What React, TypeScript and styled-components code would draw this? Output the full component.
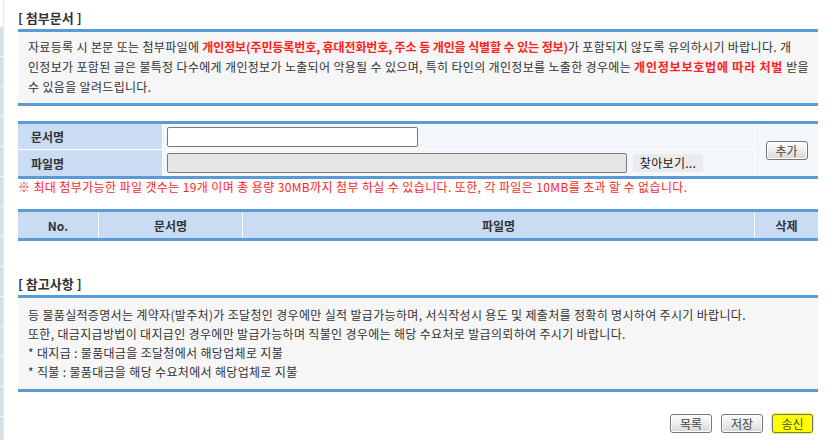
import React from "react";
import styled, { createGlobalStyle } from "styled-components";

const GlobalStyle = createGlobalStyle`
  html, body { margin: 0; padding: 0; background: #ffffff; }
  body {
    font-family: "Noto Sans CJK KR", "Noto Sans", sans-serif;
    font-size: 12px;
    color: #333333;
  }
  * { box-sizing: border-box; }
`;

const Page = styled.div`
  display: flex;
  width: 832px;
  min-height: 440px;
`;

const SideStrip = styled.div`
  width: 4px;
  flex: none;
  background:
    linear-gradient(#ffffff 0 26px, transparent 26px),
    repeating-linear-gradient(
      to bottom,
      #ffffff 0 1px,
      #d5dfe6 1px 30px
    );
  background-position: 0 0, 0 26px;
  border-right: 1px solid #e3e8ec;
`;

const Main = styled.div`
  width: 800px;
  margin-left: 14px;
  display: flex;
  flex-direction: column;
`;

const SectionTitle = styled.div<{ $top: number }>`
  margin-top: ${(p) => p.$top}px;
  height: 18px;
  line-height: 18px;
  font-size: 13px;
  font-weight: 700;
  color: #333333;
  margin-bottom: 2px;
`;

const InfoBox = styled.div<{ $pt: number; $pb: number; $lh: number }>`
  border-top: 3px solid #5b9bd5;
  border-bottom: 3px solid #5b9bd5;
  background: #f6f6f6;
  padding: ${(p) => p.$pt}px 10px ${(p) => p.$pb}px 10px;
  line-height: ${(p) => p.$lh}px;
  font-size: 12px;
  color: #333333;
  letter-spacing: 0.33px;
`;

const Line = styled.div`
  white-space: nowrap;
`;

const Red = styled.span<{ $ls: number }>`
  color: #ff2020;
  font-weight: 700;
  letter-spacing: ${(p) => p.$ls}px;
`;

const FormTable = styled.div`
  margin-top: 15px;
  border-top: 3px solid #5b9bd5;
  border-bottom: 3px solid #5b9bd5;
  display: grid;
  grid-template-columns: 144px 1fr 63px;
  grid-template-rows: 25px 26px;
  gap: 1px;
  background: #ffffff;
`;

const LabelCell = styled.div`
  background: #c9dcf4;
  font-weight: 700;
  color: #333333;
  padding-left: 13px;
  display: flex;
  align-items: center;
`;

const FieldCell = styled.div`
  background: #f3f7fc;
  padding-left: 4px;
  display: flex;
  align-items: center;
  gap: 6px;
`;

const AddCell = styled.div`
  grid-column: 3;
  grid-row: 1 / span 2;
  background: #f3f7fc;
  display: flex;
  align-items: center;
  justify-content: center;
`;

const TextInput = styled.input<{ $w: number; $disabled?: boolean }>`
  width: ${(p) => p.$w}px;
  height: 20px;
  border: 1px solid #7a7a7a;
  border-radius: 2px;
  background: ${(p) => (p.$disabled ? "#e5e5e5" : "#ffffff")};
  padding: 0 3px;
  font-family: inherit;
  font-size: 12px;
  margin: 0;
`;

const BrowseButton = styled.div`
  width: 70px;
  height: 18px;
  background: #ebebeb;
  color: #111111;
  font-size: 12px;
  line-height: 18px;
  text-align: center;
  letter-spacing: 0.3px;
`;

const GrayButton = styled.div<{ $w: number; $yellow?: boolean }>`
  width: ${(p) => p.$w}px;
  height: 19px;
  border: 1px solid #767676;
  border-radius: 3px;
  background: ${(p) =>
    p.$yellow
      ? "#ffff00"
      : "linear-gradient(to bottom, #fdfdfd 0%, #ececec 50%, #d6d6d4 100%)"};
  box-shadow: ${(p) =>
    p.$yellow ? "0 0 1px 1px #f2f23a" : "inset 0 0 0 1px #ffffff"};
  color: #444444;
  font-size: 12px;
  line-height: 17px;
  text-align: center;
  user-select: none;
`;

const Note = styled.div`
  color: #ff1e1e;
  font-size: 12px;
  line-height: 15px;
  white-space: nowrap;
  letter-spacing: 0.38px;
`;

const ListHeader = styled.div`
  margin-top: 15px;
  border-top: 3px solid #5b9bd5;
  border-bottom: 3px solid #5b9bd5;
  display: grid;
  grid-template-columns: 80px 143px 1fr 63px;
  gap: 1px;
  background: #ffffff;
  height: 32px;
`;

const HeadCell = styled.div`
  background: #c9dcf4;
  font-weight: 700;
  color: #333333;
  display: flex;
  align-items: center;
  justify-content: center;
`;

const ButtonBar = styled.div`
  margin-top: 22px;
  display: flex;
  justify-content: flex-end;
  gap: 9px;
  padding-right: 5px;
`;

export default function App() {
  return (
    <>
      <GlobalStyle />
      <Page>
        <SideStrip />
        <Main>
          <SectionTitle $top={9}>[ 첨부문서 ]</SectionTitle>
          <InfoBox $pt={5} $pb={6} $lh={20}>
            <Line>
              자료등록 시 본문 또는 첨부파일에{" "}
              <Red $ls={-0.1}>개인정보(주민등록번호, 휴대전화번호, 주소 등 개인을 식별할 수 있는 정보)</Red>
              가 포함되지 않도록 유의하시기 바랍니다. 개
            </Line>
            <Line>
              인정보가 포함된 글은 불특정 다수에게 개인정보가 노출되어 악용될 수 있으며, 특히 타인의
              개인정보를 노출한 경우에는 <Red $ls={0.8}>개인정보보호법에 따라 처벌</Red> 받을
            </Line>
            <Line>수 있음을 알려드립니다.</Line>
          </InfoBox>

          <FormTable>
            <LabelCell>문서명</LabelCell>
            <FieldCell>
              <TextInput $w={251} type="text" />
            </FieldCell>
            <AddCell>
              <GrayButton $w={42}>추가</GrayButton>
            </AddCell>
            <LabelCell>파일명</LabelCell>
            <FieldCell>
              <TextInput $w={460} $disabled type="text" readOnly />
              <BrowseButton>찾아보기...</BrowseButton>
            </FieldCell>
          </FormTable>
          <Note>
            ※ 최대 첨부가능한 파일 갯수는 19개 이며 총 용량 30MB까지 첨부 하실 수 있습니다. 또한, 각
            파일은 10MB를 초과 할 수 없습니다.
          </Note>

          <ListHeader>
            <HeadCell>No.</HeadCell>
            <HeadCell>문서명</HeadCell>
            <HeadCell>파일명</HeadCell>
            <HeadCell>삭제</HeadCell>
          </ListHeader>

          <SectionTitle $top={34}>[ 참고사항 ]</SectionTitle>
          <InfoBox $pt={7} $pb={8} $lh={19}>
            <Line>
              등 물품실적증명서는 계약자(발주처)가 조달청인 경우에만 실적 발급가능하며, 서식작성시 용도 및
              제출처를 정확히 명시하여 주시기 바랍니다.
            </Line>
            <Line>
              또한, 대금지급방법이 대지급인 경우에만 발급가능하며 직불인 경우에는 해당 수요처로
              발급의뢰하여 주시기 바랍니다.
            </Line>
            <Line>* 대지급 : 물품대금을 조달청에서 해당업체로 지불</Line>
            <Line>* 직불 : 물품대금을 해당 수요처에서 해당업체로 지불</Line>
          </InfoBox>

          <ButtonBar>
            <GrayButton $w={42}>목록</GrayButton>
            <GrayButton $w={42}>저장</GrayButton>
            <GrayButton $w={41} $yellow>
              송신
            </GrayButton>
          </ButtonBar>
        </Main>
      </Page>
    </>
  );
}
